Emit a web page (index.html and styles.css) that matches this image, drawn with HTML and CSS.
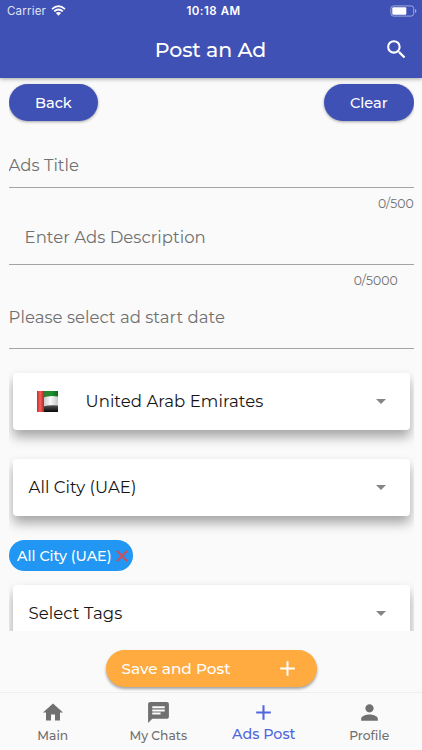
FILE: index.html
```html
<!DOCTYPE html>
<html lang="en">
<head>
<meta charset="utf-8">
<meta name="viewport" content="width=device-width, initial-scale=1">
<title>Post an Ad</title>
<link rel="stylesheet" href="styles.css">
</head>
<body>
<header class="header">
  <div class="status">
    <div class="carrier"><span class="carrier-name">Carrier</span>
      <svg width="15" height="11" viewBox="0 0 15 11"><path d="M1 4.1Q7.5-1.8 14 4.1M3.2 6.4Q7.5 2.6 11.8 6.4" fill="none" stroke="#fff" stroke-width="1.8"/><path d="M4.9 8Q7.5 5.8 10.1 8L7.5 10.8Z" fill="#fff"/></svg>
    </div>
    <span class="time">10:18 AM</span>
    <svg class="battery" width="27" height="12" viewBox="0 0 27 12"><rect x=".9" y=".9" width="22.8" height="10.2" rx="2.6" fill="none" stroke="#9fa8da" stroke-width="1"/><rect x="2.3" y="2.3" width="14" height="7.4" rx="1" fill="#fff"/><path d="M25 4v4q1.4-.6 1.4-2T25 4" fill="#9fa8da"/></svg>
  </div>
  <div class="titlebar">
    <h1 class="title">Post an Ad</h1>
    <svg class="search" width="25" height="25" viewBox="0 0 24 24"><path fill="#fff" d="M15.5 14h-.79l-.28-.27A6.47 6.47 0 0 0 16 9.5 6.5 6.5 0 1 0 9.5 16c1.61 0 3.09-.59 4.23-1.57l.27.28v.79l5 4.99L20.49 19l-4.99-5zm-6 0a4.5 4.5 0 1 1 0-9 4.5 4.5 0 0 1 0 9z"/></svg>
  </div>
</header>
<main class="form">
  <div class="actions">
    <button class="pill">Back</button>
    <button class="pill">Clear</button>
  </div>
  <div class="field field-title"><span>Ads Title</span></div>
  <div class="counter"><span>0/500</span></div>
  <div class="field field-desc"><span>Enter Ads Description</span></div>
  <div class="counter counter-desc"><span>0/5000</span></div>
  <div class="field field-date"><span>Please select ad start date</span></div>
  <div class="select select-country">
    <svg class="flag" width="21" height="21" viewBox="0 0 21 21">
      <defs>
        <linearGradient id="red"><stop offset="0" stop-color="#c92b2b"/><stop offset=".45" stop-color="#f0625c"/><stop offset="1" stop-color="#b92525"/></linearGradient>
        <linearGradient id="green"><stop offset="0" stop-color="#3c7a38"/><stop offset=".6" stop-color="#18922b"/><stop offset="1" stop-color="#15631c"/></linearGradient>
        <linearGradient id="white"><stop offset="0" stop-color="#c4c4c4"/><stop offset=".5" stop-color="#fafafa"/><stop offset="1" stop-color="#c9c9c9"/></linearGradient>
        <linearGradient id="black" x2="0" y2="1"><stop offset="0" stop-color="#555"/><stop offset="1" stop-color="#090909"/></linearGradient>
      </defs>
      <path fill="url(#white)" d="M6 0h15v21H6z"/><path fill="url(#green)" d="M6 0h15v5.5Q13 4 6 6.500z"/><path fill="url(#black)" d="M6 15.500q7-2 15-1V21H6z"/><path fill="url(#red)" d="M0 0h7v21H0z"/>
    </svg>
    <span class="country">United Arab Emirates</span><i class="arrow"></i>
  </div>
  <div class="select select-city"><span>All City (UAE)</span><i class="arrow"></i></div>
  <div class="chip"><span>All City (UAE)</span>
    <svg width="12" height="12" viewBox="0 0 12 12"><path d="M.8 .8l10.400 10.400M11.200 .8L.8 11.200" stroke="#c9505f" stroke-width="2"/></svg>
  </div>
  <div class="select select-tags"><span>Select Tags</span><i class="arrow"></i></div>
</main>
<div class="save-row">
  <button class="save"><span>Save and Post</span>
    <svg width="15" height="15" viewBox="0 0 15 15"><path d="M7.500 .2v14.600M.2 7.500h14.600" stroke="#fff" stroke-width="2"/></svg>
  </button>
</div>
<nav class="tabs">
  <a class="tab"><svg width="24" height="24" viewBox="0 0 24 24"><path d="M10 20v-6h4v6h5v-8h3L12 3 2 12h3v8z"/></svg><span>Main</span></a>
  <a class="tab"><svg width="25" height="25" viewBox="0 0 24 24"><path d="M20 2H4c-1.100 0-1.990.9-1.990 2L2 22l4-4h14c1.100 0 2-.9 2-2V4c0-1.100-.9-2-2-2zM6 9h12v2H6V9zm8 5H6v-2h8v2zm4-6H6V6h12v2z"/></svg><span>My Chats</span></a>
  <a class="tab active"><svg width="25" height="25" viewBox="0 0 24 24"><path d="M19 13h-6v6h-2v-6H5v-2h6V5h2v6h6z"/></svg><span>Ads Post</span></a>
  <a class="tab"><svg width="25" height="25" viewBox="0 0 24 24"><path d="M12 12c2.210 0 4-1.790 4-4s-1.790-4-4-4-4 1.790-4 4 1.790 4 4 4zm0 2c-2.670 0-8 1.340-8 4v2h16v-2c0-2.660-5.330-4-8-4z"/></svg><span>Profile</span></a>
</nav>
</body>
</html>
```
FILE: styles.css
```css
* { box-sizing: border-box; }
body {
  margin: 0;
  width: 422px;
  height: 750px;
  overflow: hidden;
  display: flex;
  flex-direction: column;
  background: #fafafa;
  color: #212121;
  font-family: Montserrat, Inter, "Liberation Sans", sans-serif;
  font-size: 16.5px;
}
span { white-space: nowrap; }
svg { flex: none; display: block; }
button { border: 0; font: inherit; color: #fff; }

.header {
  height: 78px;
  flex: none;
  background: #3f51b5;
  color: #fff;
  box-shadow: 0 1px 4px rgba(0, 0, 0, .35);
  z-index: 1;
}
.status {
  height: 21px;
  display: grid;
  grid-template-columns: 1fr auto 1fr;
  align-items: center;
  padding: 1px 5px 0 7px;
  font-family: Inter, "Liberation Sans", sans-serif;
  font-size: 11.5px;
}
.carrier { display: flex; align-items: center; gap: 5px; color: #e0e3f4; }
.carrier-name { letter-spacing: .2px; }
.carrier svg { margin-top: -1px; }
.time { font-weight: 600; font-size: 11.5px; letter-spacing: .5px; padding-left: 3px; }
.battery { justify-self: end; margin-top: -1px; }
.titlebar {
  height: 56px;
  display: grid;
  grid-template-columns: 1fr auto 1fr;
  align-items: center;
  padding: 0 13px 0 12px;
}
.title { grid-column: 2; margin: 0; font-size: 20.5px; font-weight: 500; letter-spacing: -.1px; }
.search { justify-self: end; }

.form {
  height: 553px;
  flex: none;
  width: 405px;
  margin-left: 8.6px;
  overflow: hidden;
}
.actions { display: flex; justify-content: space-between; padding-top: 6px; height: 43px; }
.pill {
  width: 89.600px;
  height: 36.600px;
  border-radius: 19px;
  background: #3f51b5;
  box-shadow: 0 1px 3px rgba(0, 0, 0, .35);
  font-size: 14.5px;
  font-weight: 500;
  padding: 1px 0 0;
}
.field {
  display: flex;
  align-items: center;
  border-bottom: 1px solid #a4a4a4;
  color: #707070;
  font-size: 16.5px;
  letter-spacing: .03px;
}
.field-title { height: 67px; padding-top: 21px; }
.counter { height: 32px; padding-bottom: 1px; display: flex; align-items: center; justify-content: flex-end; color: #707070; font-size: 12.4px; }
.field-desc { height: 45px; padding: 0 16px 11px; }
.counter-desc { height: 31px; padding-right: 16px; }
.field-date { height: 53px; padding-bottom: 10px; }
.select {
  display: flex;
  align-items: center;
  height: 57px;
  margin: 0 4px;
  padding: 0 24px 1px 16px;
  border-radius: 4px;
  background: #fff;
  box-shadow: 0 7px 12px rgba(0, 0, 0, .34);
  font-size: 16.5px;
  letter-spacing: .06px;
  color: #151515;
}
.select span { margin-top: -1px; }
.select-country { margin-top: 24px; padding-left: 24px; }
.select-city { margin-top: 29px; }
.select-tags { margin-top: 14px; }
.select .country { margin-left: 28px; }
.arrow {
  margin-left: auto;
  border: 5px solid transparent;
  border-top-color: #858585;
  border-bottom: 0;
}
.chip {
  display: flex;
  align-items: center;
  justify-content: space-between;
  width: 124.500px;
  height: 31px;
  margin-top: 24px;
  padding: 0 5px 0 8.500px;
  border-radius: 16px;
  background: #2196f3;
  color: #fff;
  font-size: 14.3px;
  font-weight: 500;
}

.save-row { height: 61px; flex: none; padding-top: 19px; display: flex; justify-content: center; }
.save {
  width: 211px;
  height: 37px;
  padding: 0 21.500px 0 16px;
  border-radius: 19px;
  background: #ffab40;
  box-shadow: 0 2px 3px rgba(0, 0, 0, .35);
  display: flex;
  justify-content: space-between;
  align-items: center;
  font-size: 15.3px;
  font-weight: 500;
}
.save svg { margin-top: -1px; }
.tabs { height: 58px; flex: none; display: grid; grid-template-columns: repeat(4, 1fr); border-top: 1px solid #efefef; }
.tab {
  display: flex;
  flex-direction: column;
  align-items: center;
  padding-top: 7px;
  font-size: 12.3px;
  font-weight: 500;
  color: #707070;
  fill: currentColor;
}
.tab svg { height: 25px; }
.tab span { line-height: 21px; }
.active { color: #4f66e0; font-size: 14.3px; }
.active span { line-height: 19px; }
```
